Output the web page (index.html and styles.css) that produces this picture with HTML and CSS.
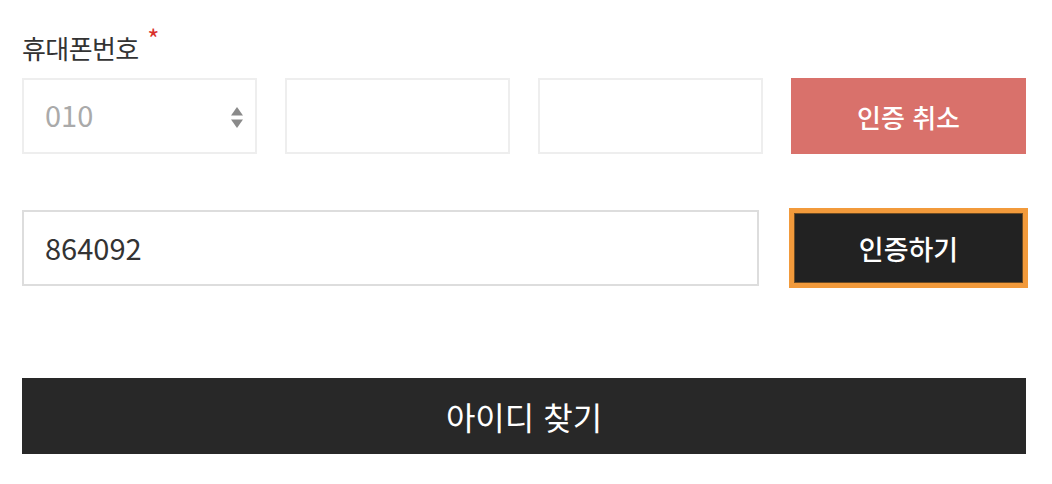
FILE: index.html
```html
<!DOCTYPE html>
<html lang="ko">
<head>
  <meta charset="UTF-8">
  <meta name="viewport" content="width=device-width, initial-scale=1.0">
  <title>아이디 찾기</title>
  <link rel="stylesheet" href="styles.css">
</head>
<body>

<div class="container">
  <form id="findIdForm">
    <label class="field-label">휴대폰번호 <span class="required">*</span></label>

    <!-- Phone number row -->
    <div class="phone-row">
      <div class="select-box">
        <span class="select-value">010</span>
        <span class="select-arrows">
          <svg width="12" height="22" viewBox="0 0 12 22">
            <path d="M6 0 L12 8.5 L0 8.5 Z" fill="#8a8a8a"/>
            <path d="M0 12.5 L12 12.5 L6 21 Z" fill="#8a8a8a"/>
          </svg>
        </span>
      </div>
      <input type="text" class="text-input light" id="phoneMid">
      <input type="text" class="text-input light" id="phoneLast">
      <button type="button" class="btn btn-cancel">인증 취소</button>
    </div>

    <!-- Verification code row -->
    <div class="code-row">
      <input type="text" class="text-input" id="authCode" value="864092">
      <button type="button" class="btn btn-verify">인증하기</button>
    </div>

    <button type="submit" class="btn btn-submit">아이디 찾기</button>
  </form>
</div>

</body>
</html>
```

FILE: styles.css
```css
body {
  font-family: "Noto Sans CJK KR", "Noto Sans", sans-serif;
  background-color: #ffffff;
  margin: 0;
  padding: 0;
  color: #333;
}

.container {
  padding: 28px 26px 0 22px;
}

.field-label {
  display: block;
  font-size: 26px;
  line-height: 40px;
  height: 40px;
  margin-bottom: 10px;
  color: #333;
  letter-spacing: -0.6px;
}

.required {
  color: #d9302b;
  font-size: 26px;
  position: relative;
  top: -10px;
  margin-left: 2px;
}

.phone-row {
  display: grid;
  grid-template-columns: 235px 225px 225px 235px;
  column-gap: 28px;
  height: 76px;
}

.select-box {
  border: 2px solid #eeeeee;
  box-sizing: border-box;
  display: flex;
  align-items: center;
  justify-content: space-between;
  padding: 0 12px 0 21px;
}

.select-value {
  font-size: 29px;
  color: #aaaaaa;
  margin-top: -4px;
}

.select-arrows {
  display: flex;
  align-items: center;
  margin-top: 3px;
}

.text-input {
  box-sizing: border-box;
  height: 76px;
  border: 2px solid #dddddd;
  padding: 0 21px 3px;
  font-family: inherit;
  font-size: 29px;
  color: #333;
  background: #fff;
  outline: none;
}

.text-input.light {
  border-color: #eeeeee;
  width: 100%;
}

.btn {
  border: none;
  font-family: inherit;
  cursor: pointer;
  color: #fff;
  padding: 0;
}

.btn-cancel {
  background-color: #d9716b;
  font-size: 26px;
  font-weight: 500;
  height: 76px;
}

.code-row {
  display: grid;
  grid-template-columns: 737px 235px;
  column-gap: 32px;
  margin-top: 56px;
  height: 76px;
}

.btn-verify {
  background-color: #222222;
  font-size: 27px;
  font-weight: 500;
  height: 76px;
  border: 3px solid #f29a3b;
  box-shadow: inset 0 0 0 1px #6e4b22;
  outline: 2px solid #f29a3b;
}

.btn-submit {
  display: block;
  width: 100%;
  height: 76px;
  margin-top: 92px;
  background-color: #282828;
  font-size: 32px;
  font-weight: 400;
}
```
